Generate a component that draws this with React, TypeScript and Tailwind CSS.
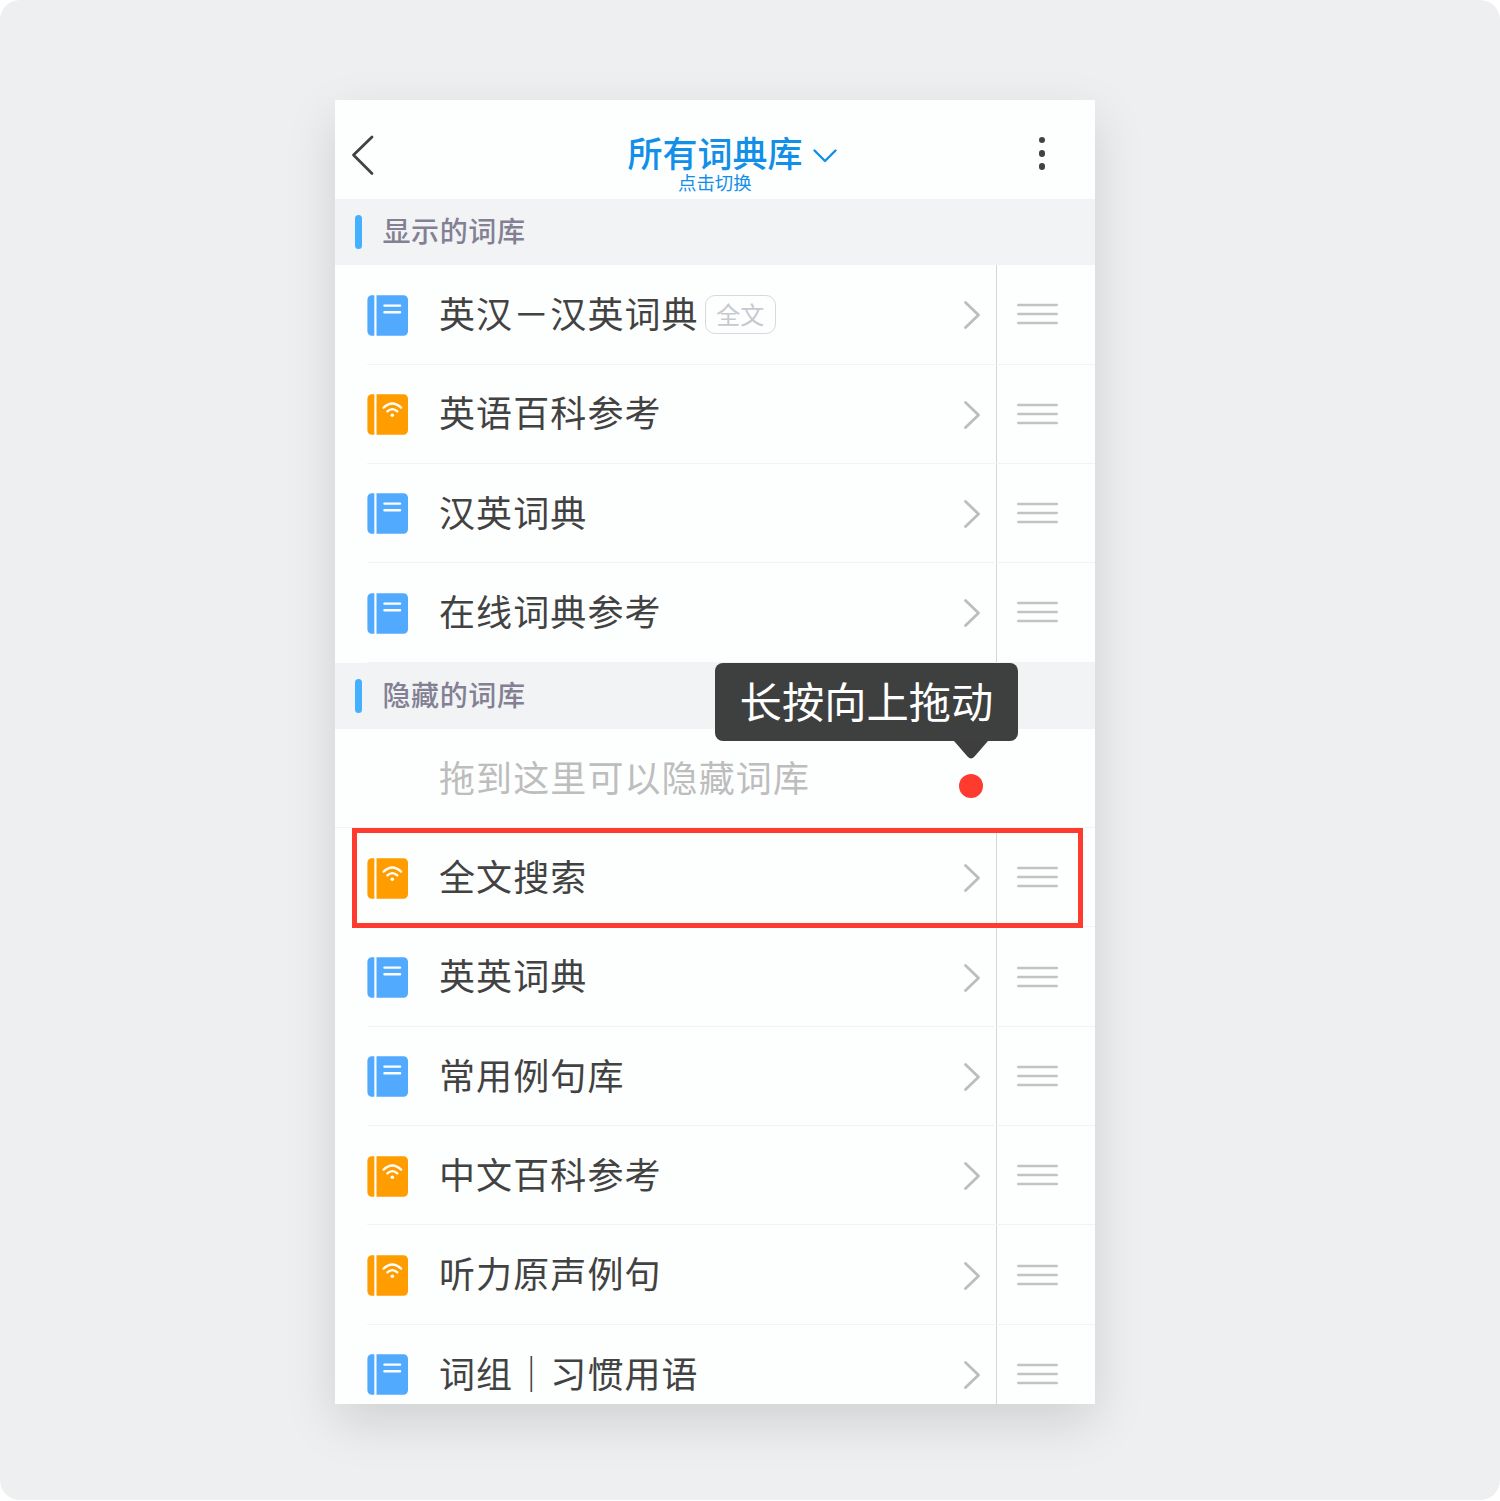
type Kind = 'local' | 'online';

interface Entry {
  name: string;
  kind: Kind;
  tag?: string;
}

const shown: Entry[] = [
  { name: '英汉－汉英词典', kind: 'local', tag: '全文' },
  { name: '英语百科参考', kind: 'online' },
  { name: '汉英词典', kind: 'local' },
  { name: '在线词典参考', kind: 'local' },
];

const hidden: Entry[] = [
  { name: '全文搜索', kind: 'online' },
  { name: '英英词典', kind: 'local' },
  { name: '常用例句库', kind: 'local' },
  { name: '中文百科参考', kind: 'online' },
  { name: '听力原声例句', kind: 'online' },
  { name: '词组｜习惯用语', kind: 'local' },
];

function BookIcon({ kind }: { kind: Kind }) {
  const fill = kind === 'local' ? '#52aaff' : '#ff9c00';
  return (
    <svg width="41" height="41" viewBox="-0.4 -0.2 41.4 41.4" className="mt-[1.500px] shrink-0">
      <path d="M4.500 0H7v41H4.500A4.500 4.500 0 0 1 0 36.500V4.500A4.500 4.500 0 0 1 4.500 0Z" fill={fill} />
      <path d="M9.200 0H36.500A4.500 4.500 0 0 1 41 4.500V36.500A4.500 4.500 0 0 1 36.500 41H9.200Z" fill={fill} />
      {kind === 'local' ? (
        <path d="M17.200 10.500H33M17.200 17.200H33" stroke="#fff" strokeWidth="2.400" strokeLinecap="round" />
      ) : (
        <g fill="none" stroke="#fff" strokeWidth="2.300" strokeLinecap="round">
          <path d="M16.300 13.600Q25.200 5.200 34.100 13.600" />
          <path d="M20.200 17.400Q25.200 12.800 30.200 17.400" />
          <circle cx="25.200" cy="21.200" r="1.800" fill="#fff" stroke="none" />
        </g>
      )}
    </svg>
  );
}

function SectionHeader({ title }: { title: string }) {
  return (
    <div className="flex h-[66.200px] shrink-0 items-center bg-[#f2f3f5] pl-5">
      <div className="h-[34px] w-[6.500px] rounded-full bg-[#45b0ff]" />
      <span className="-mt-[4px] ml-[21px] text-[28px] leading-10 font-medium tracking-[0.600px] text-[#828092]">
        {title}
      </span>
    </div>
  );
}

function Row({ entry }: { entry: Entry }) {
  return (
    <div className="flex h-[99.350px] shrink-0 pl-8">
      <div className="flex flex-1 items-center border-b border-[#f3f3f5]">
        <BookIcon kind={entry.kind} />
        <span className="-mt-[4.500px] ml-[31px] text-[36px] leading-[54px] tracking-[1.100px] whitespace-nowrap text-[#424242]">
          {entry.name}
        </span>
        {entry.tag && (
          <span className="mt-px ml-[6px] flex h-[39px] w-[71px] items-center justify-center rounded-[10px] border border-[#d9d9dc] pb-[2px] text-[24px] leading-none text-[#c8c8cf]">
            {entry.tag}
          </span>
        )}
        <svg width="18" height="30" viewBox="0 0 18 30" className="mt-[2px] mr-[15px] ml-auto">
          <path d="M2.500 2.500L15.500 15L2.500 27.500" fill="none" stroke="#bdbdbd" strokeWidth="2.800" strokeLinecap="round" strokeLinejoin="round" />
        </svg>
        <div className="flex h-full w-[99px] items-center border-l border-[#d6d6d9] pl-5">
          <svg width="41" height="24" viewBox="0 0 41 24">
            <path d="M1.300 3H39.700M1.300 12H39.700M1.300 21H39.700" stroke="#c3c3c3" strokeWidth="2.600" strokeLinecap="round" />
          </svg>
        </div>
      </div>
    </div>
  );
}

export default function App() {
  return (
    <div className="h-[1501px] bg-white font-['Noto_Sans_CJK_SC',sans-serif]">
      <div className="flex h-[1500px] w-[1500px] rounded-[20px] bg-[#eeeff1] pt-[100px] pl-[335px]">
        <div className="relative h-[1304px] w-[760px] shadow-[0_18px_48px_rgba(0,0,0,0.13)]">
          <div className="flex h-full flex-col overflow-hidden bg-[#fdfefe]">
            <header className="flex h-[99px] shrink-0 items-start justify-between pr-[44px] pl-4">
              <svg width="24" height="42" viewBox="0 0 24 42" className="mt-[34px]">
                <path d="M21 3L2.500 21L21 39.500" fill="none" stroke="#424242" strokeWidth="2.800" strokeLinecap="round" strokeLinejoin="round" />
              </svg>
              <div className="ml-[57px] flex flex-col pt-[34px] text-[#118fe9]">
                <div className="flex h-9 items-center">
                  <span className="text-[35px] leading-9 font-medium">所有词典库</span>
                  <svg width="26" height="16" viewBox="0 0 26 16" className="mt-[7px] ml-[9px]">
                    <path d="M2.500 2.500L13 13L23.500 2.500" fill="none" stroke="#118fe9" strokeWidth="2.400" strokeLinecap="round" strokeLinejoin="round" />
                  </svg>
                </div>
                <span className="mt-[2px] ml-[50.500px] text-[18.400px] leading-5">点击切换</span>
              </div>
              <div className="mt-[37px] flex w-[18px] flex-col items-center gap-[6.800px]">
                <span className="size-[6.400px] rounded-full bg-[#424242]" />
                <span className="size-[6.400px] rounded-full bg-[#424242]" />
                <span className="size-[6.400px] rounded-full bg-[#424242]" />
              </div>
            </header>
            <SectionHeader title="显示的词库" />
            {shown.map((e) => (
              <Row key={e.name} entry={e} />
            ))}
            <SectionHeader title="隐藏的词库" />
            <div className="flex h-[99.350px] shrink-0 items-center border-b border-[#f3f3f5] pb-[4px] pl-[104px] text-[36px] tracking-[1.100px] text-[#bdbdbd]">
              拖到这里可以隐藏词库
            </div>
            {hidden.map((e) => (
              <Row key={e.name} entry={e} />
            ))}
          </div>

          {/* Annotations over the list */}
          <div className="absolute top-[728px] left-[17px] h-[100px] w-[731px] border-[5.500px] border-[#ff3b30]" />
          <div className="absolute top-[563px] left-[380px] flex h-[78px] w-[303px] items-center justify-center rounded-lg bg-[#3e3f3f] pb-[4px] text-[42.300px] leading-none text-white">
            长按向上拖动
            <svg width="34" height="18" viewBox="0 0 34 18" className="absolute top-[78px] left-[239px]">
              <path d="M0 0H34L20.500 15.600Q17 19.600 13.500 15.600Z" fill="#3e3e3e" />
            </svg>
          </div>
          <div className="absolute top-[674px] left-[624px] size-6 rounded-full bg-[#ff3b30]" />
        </div>
      </div>
    </div>
  );
}
